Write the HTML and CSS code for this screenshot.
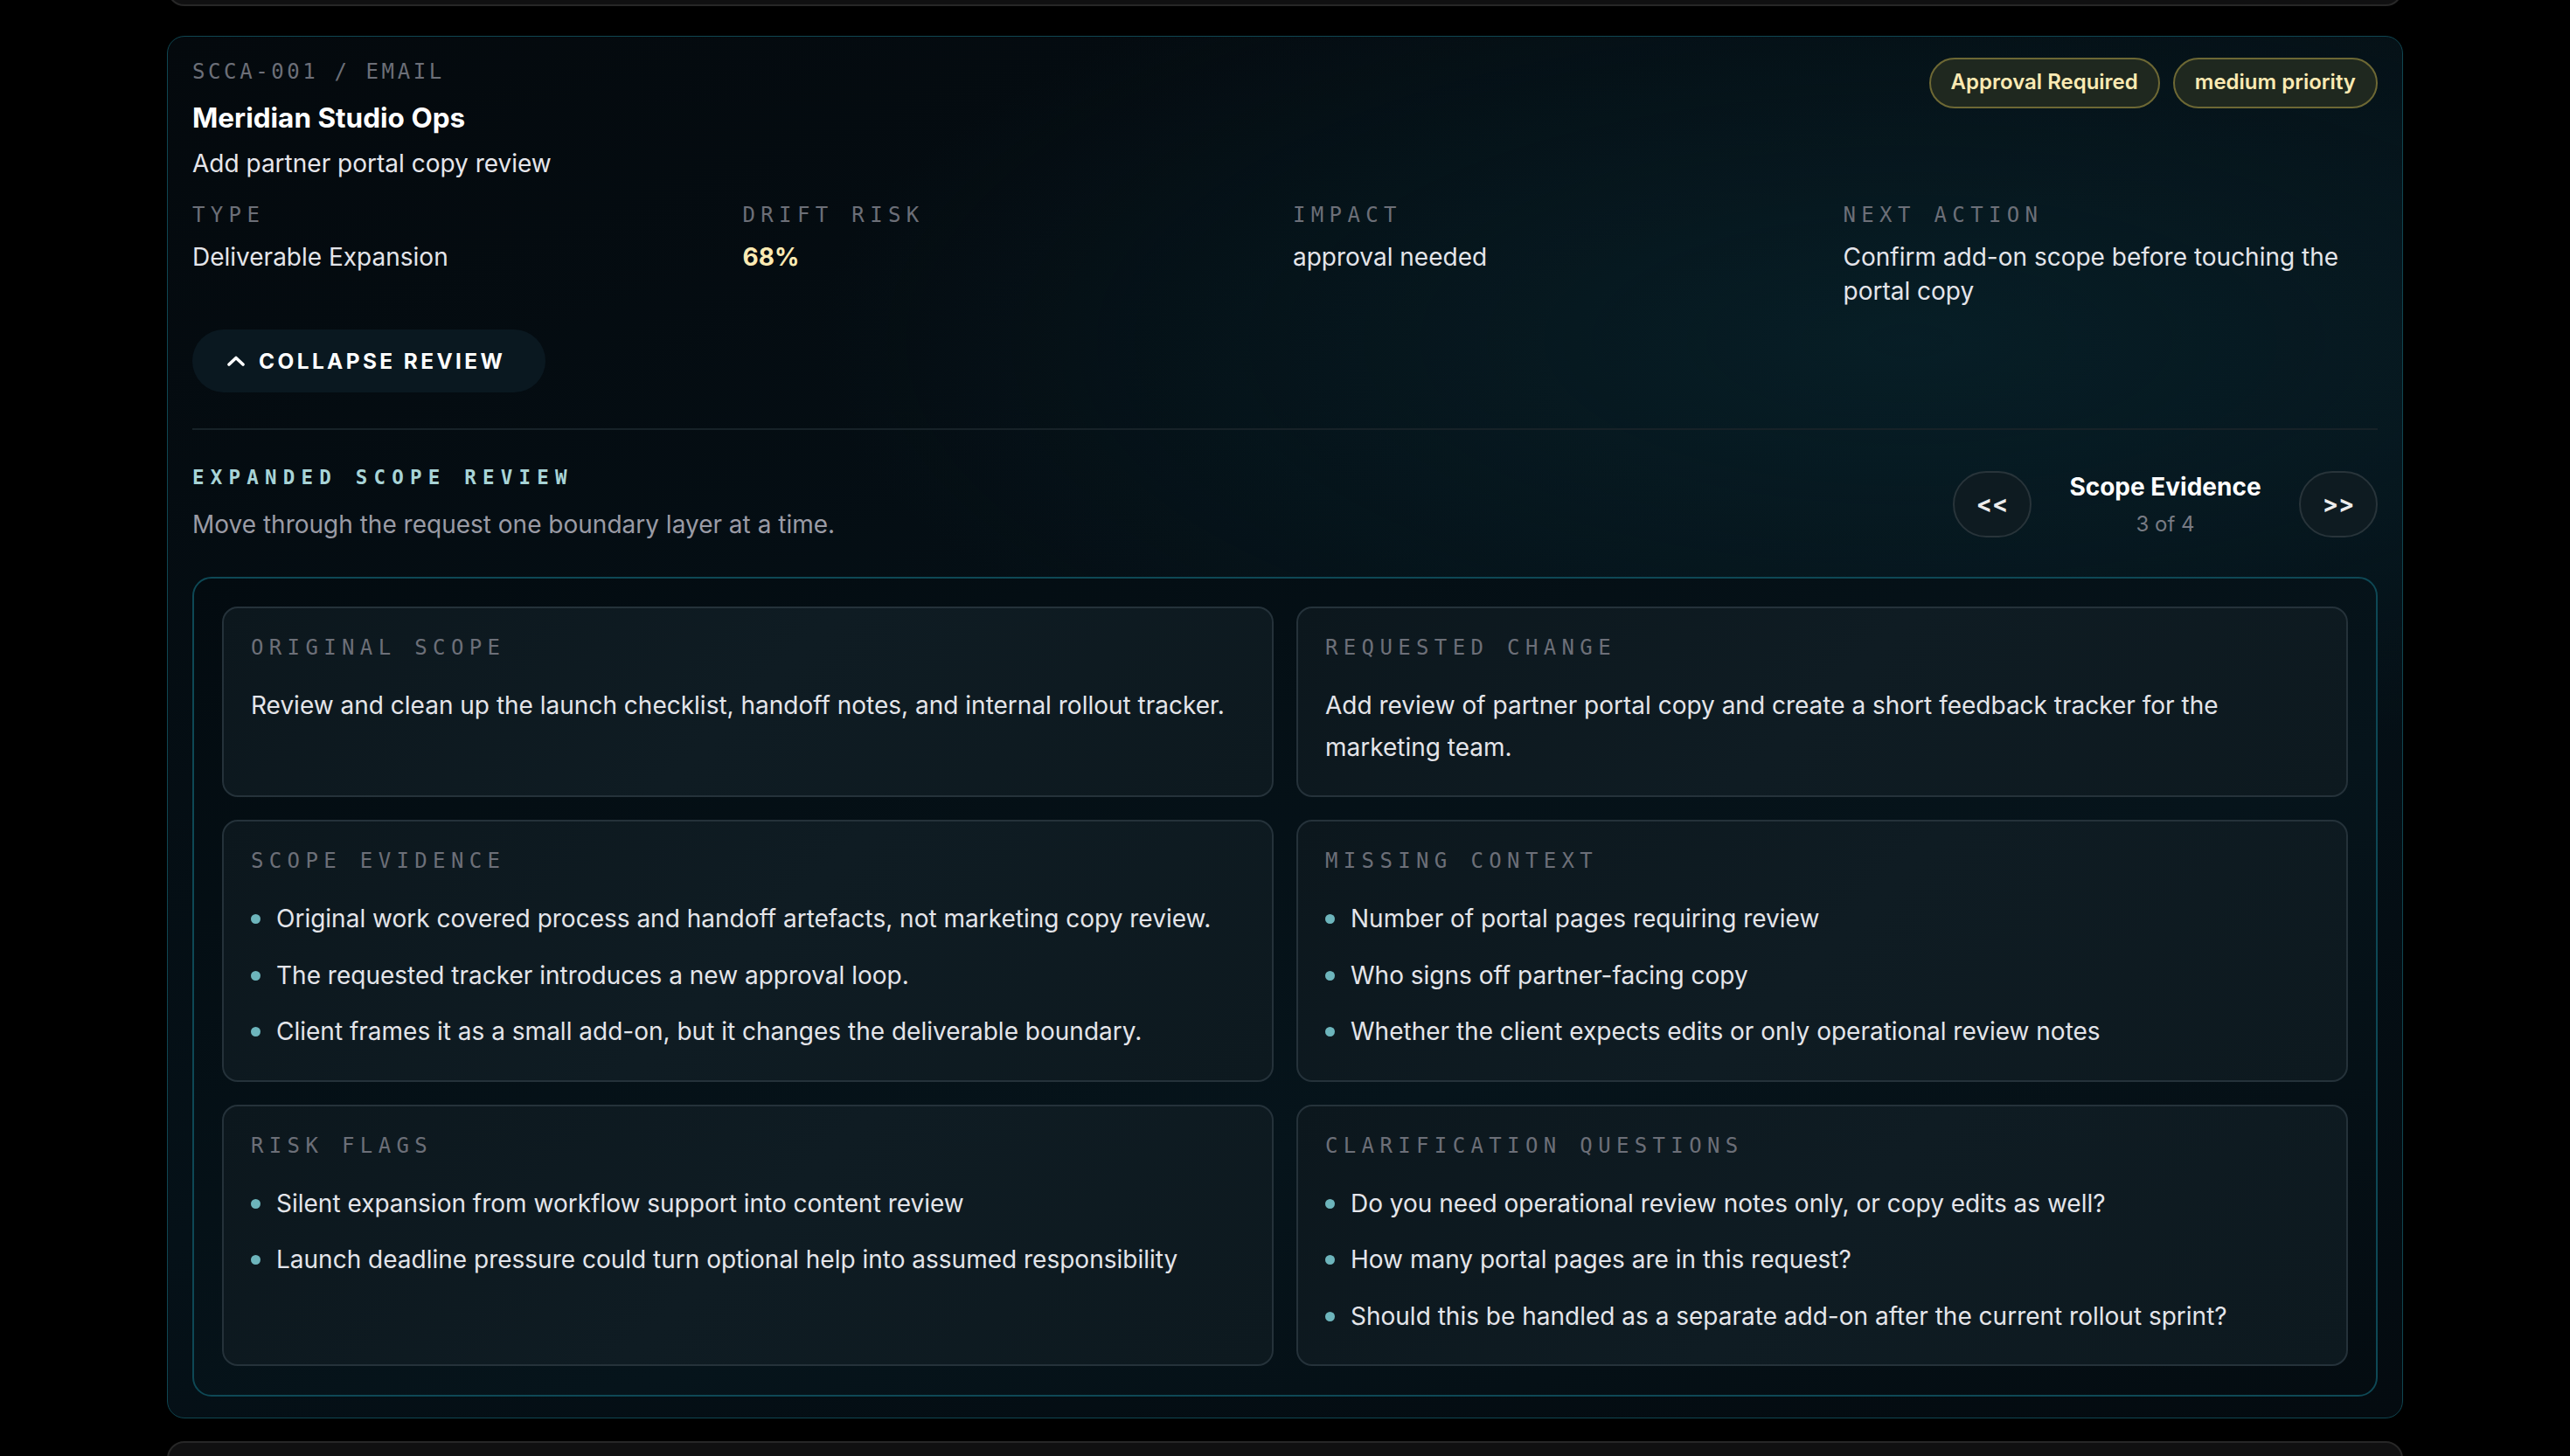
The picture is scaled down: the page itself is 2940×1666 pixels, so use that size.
FILE: index.html
```html
<!DOCTYPE html>
<html lang="en">
<head>
  <meta charset="UTF-8" />
  <title>Scope Review</title>
  <link rel="stylesheet" href="styles.css">
</head>
<body>

  <div class="feed">
    <div class="ghost ghost-top"></div>

    <article class="request">
      <header class="request-head">
        <div>
          <div class="meta">SCCA-001 / EMAIL</div>
          <h2>Meridian Studio Ops</h2>
          <p class="summary">Add partner portal copy review</p>
        </div>
        <div class="pills">
          <span class="pill">Approval Required</span>
          <span class="pill">medium priority</span>
        </div>
      </header>

      <div class="stats">
        <div>
          <div class="label">Type</div>
          <div class="value">Deliverable Expansion</div>
        </div>
        <div>
          <div class="label">Drift risk</div>
          <div class="value risk">68%</div>
        </div>
        <div>
          <div class="label">Impact</div>
          <div class="value">approval needed</div>
        </div>
        <div>
          <div class="label">Next action</div>
          <div class="value">Confirm add-on scope before touching the portal copy</div>
        </div>
      </div>

      <button class="collapse">
        <svg width="20" height="12" viewBox="0 0 20 12"><path d="M2 10 L10 2.5 L18 10" fill="none" stroke="#fff" stroke-width="3.6" stroke-linecap="round" stroke-linejoin="round"/></svg>
        Collapse review
      </button>

      <section class="review">
        <div class="review-head">
          <div>
            <div class="eyebrow">Expanded scope review</div>
            <p class="hint">Move through the request one boundary layer at a time.</p>
          </div>
          <div class="stepper">
            <button class="step-btn">&lt;&lt;</button>
            <div class="step-name">
              <strong>Scope Evidence</strong>
              <span>3 of 4</span>
            </div>
            <button class="step-btn">&gt;&gt;</button>
          </div>
        </div>

        <div class="panel">
          <div class="block">
            <div class="block-label">Original scope</div>
            <p>Review and clean up the launch checklist, handoff notes, and internal rollout tracker.</p>
          </div>
          <div class="block">
            <div class="block-label">Requested change</div>
            <p>Add review of partner portal copy and create a short feedback tracker for the marketing team.</p>
          </div>
          <div class="block">
            <div class="block-label">Scope evidence</div>
            <ul>
              <li>Original work covered process and handoff artefacts, not marketing copy review.</li>
              <li>The requested tracker introduces a new approval loop.</li>
              <li>Client frames it as a small add-on, but it changes the deliverable boundary.</li>
            </ul>
          </div>
          <div class="block">
            <div class="block-label">Missing context</div>
            <ul>
              <li>Number of portal pages requiring review</li>
              <li>Who signs off partner-facing copy</li>
              <li>Whether the client expects edits or only operational review notes</li>
            </ul>
          </div>
          <div class="block">
            <div class="block-label">Risk flags</div>
            <ul>
              <li>Silent expansion from workflow support into content review</li>
              <li>Launch deadline pressure could turn optional help into assumed responsibility</li>
            </ul>
          </div>
          <div class="block">
            <div class="block-label">Clarification questions</div>
            <ul>
              <li>Do you need operational review notes only, or copy edits as well?</li>
              <li>How many portal pages are in this request?</li>
              <li>Should this be handled as a separate add-on after the current rollout sprint?</li>
            </ul>
          </div>
        </div>
      </section>
    </article>

    <div class="ghost ghost-bottom"></div>
  </div>

</body>
</html>
```

FILE: styles.css
```css
:root {
  --bg: #000;
  --card-border: #0f4651;
  --panel-border: #0e4855;
  --block-bg: #0e1a21;
  --block-border: #25323a;
  --text: #e4e5ea;
  --muted: #6c6f78;
  --accent: #a8d4d7;
  --dot: #6db5bc;
  --gold: #fbeab3;
  --mono: "DejaVu Sans Mono", "Liberation Mono", monospace;
}

* {
  box-sizing: border-box;
}

html, body {
  margin: 0;
  height: 100%;
  overflow: hidden;
}

body {
  background: var(--bg);
  color: var(--text);
  font-family: "Inter", "Noto Sans", sans-serif;
  font-size: 28px;
  line-height: 1.7;
}

.feed {
  width: 2558px;
  margin: 0 auto;
  display: flex;
  flex-direction: column;
}

.ghost {
  height: 80px;
  background: #101011;
  border: 2px solid #272727;
  border-radius: 20px;
}

.ghost-top {
  margin-top: -73px;
  margin-bottom: 34px;
}

.ghost-bottom {
  margin-top: 26px;
}

.request {
  border: 1px solid var(--card-border);
  border-radius: 20px;
  padding: 24px 28px 24px;
  background:
    radial-gradient(ellipse 70% 45% at 78% 22%, rgba(10, 48, 58, 0.45), transparent 70%),
    linear-gradient(160deg, #04090d 0%, #051118 55%, #040b10 100%);
  box-shadow: 0 20px 40px rgba(0, 0, 0, 0.7);
}

.request-head {
  display: flex;
  justify-content: space-between;
  align-items: flex-start;
}

.meta {
  font-family: var(--mono);
  font-size: 24px;
  line-height: 1.35;
  letter-spacing: 0.15em;
  color: var(--muted);
}

h2 {
  margin: 17px 0 0;
  font-size: 31.5px;
  line-height: 1.3;
  font-weight: 700;
  color: #fff;
}

.summary {
  margin: 8px 0 0;
  color: #e6e6eb;
}

.pills {
  display: flex;
  gap: 15px;
}

.pill {
  border: 2px solid #6d6834;
  background: #1f281f;
  color: var(--gold);
  font-size: 24px;
  font-weight: 600;
  line-height: 1.7;
  padding: 6px 23px 7px;
  border-radius: 999px;
}

.stats {
  display: grid;
  grid-template-columns: repeat(4, 1fr);
  gap: 18px;
  margin-top: 20px;
}

.label, .block-label {
  font-family: var(--mono);
  font-size: 24px;
  line-height: 1.2;
  letter-spacing: 0.265em;
  text-transform: uppercase;
  color: var(--muted);
}

.value {
  margin-top: 14px;
  line-height: 1.41;
  padding-right: 40px;
}

.value.risk {
  color: var(--gold);
  font-weight: 700;
}

.collapse {
  display: inline-flex;
  align-items: center;
  gap: 16px;
  height: 72px;
  margin-top: 23px;
  padding: 0 46px 0 40px;
  border: none;
  border-radius: 999px;
  background: #0a1820;
  color: #fff;
  font-family: "Inter", sans-serif;
  font-size: 24.4px;
  font-weight: 700;
  letter-spacing: 0.14em;
  text-transform: uppercase;
}

.review {
  margin-top: 41px;
  padding-top: 41px;
  border-top: 2px solid #172228;
}

.review-head {
  display: flex;
  justify-content: space-between;
  align-items: flex-start;
}

.eyebrow {
  font-family: var(--mono);
  font-size: 22.5px;
  line-height: 1.2;
  font-weight: 700;
  letter-spacing: 0.32em;
  text-transform: uppercase;
  color: var(--accent);
}

.hint {
  margin: 17px 0 0;
  color: #9a9ba5;
}

.stepper {
  display: flex;
  align-items: center;
  gap: 24px;
  margin-top: 3px;
}

.step-btn {
  width: 90px;
  height: 76px;
  border-radius: 999px;
  border: 2px solid #28343a;
  background: #0e1b21;
  color: #ececec;
  font-family: "Inter", sans-serif;
  font-size: 27px;
  font-weight: 700;
}

.step-name {
  min-width: 258px;
  display: flex;
  flex-direction: column;
  align-items: center;
  gap: 4px;
  line-height: 1.5;
}

.step-name strong {
  font-size: 28px;
  color: #fff;
}

.step-name span {
  font-size: 24px;
  color: #787b84;
}

.panel {
  margin-top: 36px;
  border: 2px solid var(--panel-border);
  border-radius: 22px;
  padding: 32px 32px 33px;
  background: linear-gradient(160deg, #030b10 0%, #06141b 60%, #040c11 100%);
  display: grid;
  grid-template-columns: 1fr 1fr;
  gap: 26px;
}

.block {
  border: 2px solid var(--block-border);
  border-radius: 18px;
  padding: 31px;
  background: linear-gradient(135deg, #0c171d 0%, #0f1c23 50%, #0d191f 100%);
}

.block p {
  margin: 28px 0 0;
  color: var(--text);
}

.block ul {
  list-style: none;
  margin: 28px 0 0;
  padding: 0;
  display: flex;
  flex-direction: column;
  gap: 17px;
}

.block li {
  display: flex;
  gap: 18px;
}

.block li::before {
  content: "";
  flex: none;
  width: 11px;
  height: 11px;
  margin-top: 18px;
  border-radius: 50%;
  background: var(--dot);
}
```
